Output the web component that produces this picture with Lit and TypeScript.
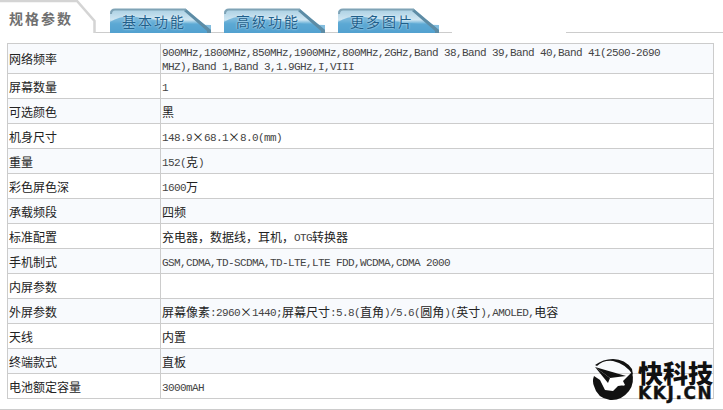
import { LitElement, html, css, svg } from "lit";
import { customElement } from "lit/decorators.js";

const ROWS: [string, string][] = [
  ["网络频率", "900MHz,1800MHz,850MHz,1900MHz,800MHz,2GHz,Band 38,Band 39,Band 40,Band 41(2500-2690 MHZ),Band 1,Band 3,1.9GHz,I,VIII"],
  ["屏幕数量", "1"],
  ["可选颜色", "黑"],
  ["机身尺寸", "148.9×68.1×8.0(mm)"],
  ["重量", "152(克)"],
  ["彩色屏色深", "1600万"],
  ["承载频段", "四频"],
  ["标准配置", "充电器，数据线，耳机，OTG转换器"],
  ["手机制式", "GSM,CDMA,TD-SCDMA,TD-LTE,LTE FDD,WCDMA,CDMA 2000"],
  ["内屏参数", ""],
  ["外屏参数", "屏幕像素:2960×1440;屏幕尺寸:5.8(直角)/5.6(圆角)(英寸),AMOLED,电容"],
  ["天线", "内置"],
  ["终端款式", "直板"],
  ["电池额定容量", "3000mAH"],
];

function mixed(text: string) {
  const parts = text.match(/[\u2E80-\u9FFF\uFF00-\uFFEF×]+|[^\u2E80-\u9FFF\uFF00-\uFFEF×]+/g) ?? [];
  return parts.map((p) =>
    /^[\u2E80-\u9FFF\uFF00-\uFFEF×]/.test(p)
      ? html`<span class="cjk">${p}</span>`
      : html`<span class="lat">${p}</span>`
  );
}

const blueTab = svg`
  <svg class="tab-bg" width="101" height="25" viewBox="0 0 101 25">
    <defs>
      <linearGradient id="tg" x1="0" y1="0" x2="0" y2="1">
        <stop offset="0" stop-color="#a9cfe2"/>
        <stop offset="0.45" stop-color="#cfe6f2"/>
        <stop offset="0.62" stop-color="#62add6"/>
        <stop offset="1" stop-color="#3f90c4"/>
      </linearGradient>
    </defs>
    <path d="M0 25V5Q0 1 4 1H76L101 22V25Z" fill="url(#tg)"/>
    <path d="M0 14Q12 7 26 9T62 14T101 17V25H0Z" fill="#5aa7d3" opacity=".75"/>
    <path d="M76 1 101 22V25H97V23L74 3Z" fill="#5d8ca5"/>
    <path d="M1 6Q1 1.500 5 1.500H76" fill="none" stroke="#7fa3b6" stroke-width="2"/>
  </svg>`;

@customElement("app-root")
export class AppRoot extends LitElement {
  static styles = css`
    :host {
      display: block;
      position: relative;
      width: 723px;
      height: 410px;
      overflow: hidden;
      background: #fff;
      font-family: "Noto Sans CJK SC", sans-serif;
      color: #222;
    }
    .tabs {
      display: flex;
      align-items: flex-end;
      height: 33px;
    }
    .tab-active {
      position: relative;
      width: 95px;
      height: 33px;
      flex: none;
      box-sizing: border-box;
      padding: 9px 0 0 9px;
      font-size: 14px;
      line-height: 18px;
      font-weight: 700;
      letter-spacing: 2px;
      color: #707070;
    }
    .tab-active svg {
      position: absolute;
      left: 0;
      top: 0;
    }
    .tab-active span {
      position: relative;
    }
    .rail {
      display: flex;
      gap: 13px;
      box-sizing: border-box;
      width: 357px;
      height: 25px;
      padding-left: 15px;
      border-bottom: 1px solid #ccc;
      flex: none;
    }
    .rail-end {
      margin-left: 114px;
      flex: 1;
      height: 25px;
      box-sizing: border-box;
      border-bottom: 1px solid #ccc;
    }
    .tab {
      position: relative;
      width: 101px;
      height: 24px;
      box-sizing: border-box;
      padding: 4px 0 0 12px;
      font-size: 14px;
      line-height: 18px;
      letter-spacing: 2px;
      color: #1f5f8a;
      text-shadow: 0 0 2px #e8f6ff;
    }
    .tab-bg {
      position: absolute;
      left: 0;
      top: 0;
    }
    .tab span {
      position: relative;
    }
    table {
      margin: 10px 0 0 7px;
      width: 707px;
      border-collapse: collapse;
      table-layout: fixed;
    }
    td {
      border: 1px solid #ccc;
      height: 25px;
      padding: 2px 0 0 1px;
      box-sizing: border-box;
      font-size: 12px;
      line-height: 14px;
      vertical-align: middle;
    }
    td.label {
      width: 153px;
      padding-left: 1px;
    }
    tr:nth-child(odd) td {
      background: #f8fafd;
    }
    tr:first-child td {
      height: 30px;
      padding-top: 0;
    }
    .cjk {
      font-size: 12px;
      line-height: 12px;
    }
    .lat {
      font-family: "Liberation Mono", monospace;
      font-size: 11px;
      line-height: 12px;
      letter-spacing: -0.6px;
      color: #444;
      vertical-align: 1px;
    }
    .foot {
      margin-top: 10px;
      border-top: 1px solid #ccc;
    }
    .mark {
      position: absolute;
      left: 588px;
      top: 358px;
      display: flex;
      align-items: flex-start;
      color: #111;
    }
    .mark-text {
      display: flex;
      flex-direction: column;
      width: 78px;
      margin-left: 2px;
    }
    .mark-cn {
      font-size: 25px;
      line-height: 28px;
      font-weight: 900;
      white-space: nowrap;
    }
    .mark-en {
      font-family: "DejaVu Sans", sans-serif;
      font-weight: 700;
      font-size: 17px;
      line-height: 14px;
      letter-spacing: 1.6px;
      white-space: nowrap;
      -webkit-text-stroke: 0.4px #111;
    }
  `;

  render() {
    return html`
      <div class="tabs">
        <div class="tab-active">
          <svg width="96" height="33" viewBox="0 0 96 33">
            <path d="M0 1H77L94.500 21V33" fill="none" stroke="#d4d4d4" stroke-width="2.500"/>
          </svg>
          <span>规格参数</span>
        </div>
        <div class="rail">
          <div class="tab">${blueTab}<span>基本功能</span></div>
          <div class="tab">${blueTab}<span>高级功能</span></div>
          <div class="tab">${blueTab}<span>更多图片</span></div>
        </div>
        <div class="rail-end"></div>
      </div>
      <table>
        <tbody>
          ${ROWS.map(
            ([k, v]) => html`<tr>
              <td class="label">${k}</td>
              <td>${mixed(v)}</td>
            </tr>`
          )}
        </tbody>
      </table>
      <div class="foot"></div>
      <div class="mark">
        <svg width="48" height="46" viewBox="0 0 48 46">
          <path d="M7 7Q15 1 25 1Q37 1 44 11L45 17Q38 6 25 3Q15 2 9 8Z" fill="#111"/>
          <path d="M44 14Q47 25 41 33Q33 43 22 42Q9 40 6 28Q4 23 6 18L12 22L17 32L25 33L30 28L37 27L35 23Z" fill="#111"/>
          <path d="M7 9 38 18 33 25 37 28 30 26 25 21 20 25 22 20Z" fill="#fff"/>
          <path d="M7 9 38 18 22 20Z" fill="#111"/>
          <path d="M7 9 22 20 20 25Z" fill="#111"/>
        </svg>
        <div class="mark-text">
          <span class="mark-cn">快科技</span>
          <span class="mark-en">KKJ.CN</span>
        </div>
      </div>
    `;
  }
}
